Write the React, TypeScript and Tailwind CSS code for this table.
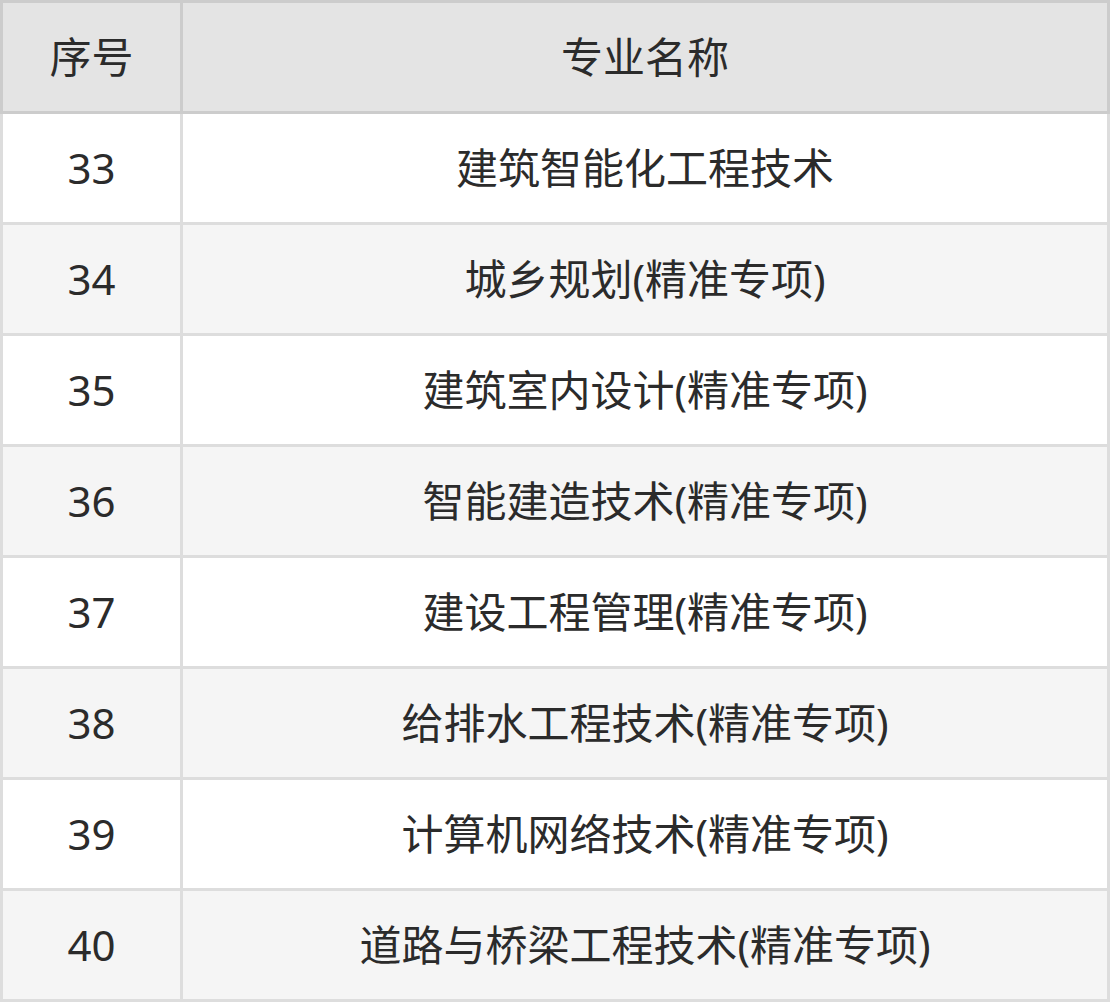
const rows = [
  { no: '33', name: '建筑智能化工程技术' },
  { no: '34', name: '城乡规划(精准专项)' },
  { no: '35', name: '建筑室内设计(精准专项)' },
  { no: '36', name: '智能建造技术(精准专项)' },
  { no: '37', name: '建设工程管理(精准专项)' },
  { no: '38', name: '给排水工程技术(精准专项)' },
  { no: '39', name: '计算机网络技术(精准专项)' },
  { no: '40', name: '道路与桥梁工程技术(精准专项)' },
];

const App = () => {
  return (
    <div
      className="w-[1110px] bg-white text-[42px] leading-none text-[#2b2b2b]"
      style={{ fontFamily: '"Noto Sans", "Noto Sans CJK SC", sans-serif' }}
    >
      {/* header */}
      <div className="grid h-[114px] grid-cols-[180px_1fr] border-[3px] border-[#cccccc] bg-[#e4e4e4]">
        <div className="flex items-center justify-center border-r-[3px] border-[#cccccc]">
          序号
        </div>
        <div className="flex items-center justify-center">专业名称</div>
      </div>

      {rows.map((row, i) => (
        <div
          key={row.no}
          className={`grid h-[111px] grid-cols-[180px_1fr] border-x-[3px] border-b-[3px] border-[#dddddd] ${
            i % 2 === 1 ? 'bg-[#f5f5f5]' : 'bg-white'
          }`}
        >
          <div className="flex items-center justify-center border-r-[3px] border-[#dddddd]">
            {row.no}
          </div>
          <div className="flex items-center justify-center">{row.name}</div>
        </div>
      ))}
    </div>
  );
};

export default App;
